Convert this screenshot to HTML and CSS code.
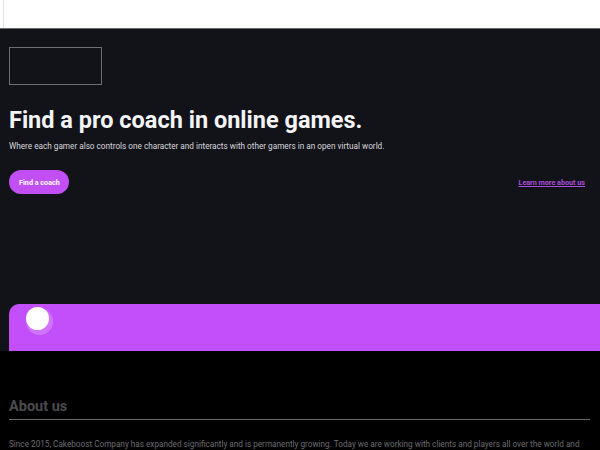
FILE: index.html
```html
<!DOCTYPE html>
<html>
<head>
<meta charset="utf-8">
<link rel="stylesheet" href="styles.css">
</head>
<body>
<div class="topbar"><div class="topbar-edge"></div></div>
<section class="hero">
  <div class="logo-box"></div>
  <h1 class="hero-title">Find a pro coach in online games.</h1>
  <p class="hero-sub">Where each gamer also controls one character and interacts with other gamers in an open virtual world.</p>
  <div class="hero-actions">
    <a class="btn-primary">Find a coach</a>
    <a class="link-more">Learn more about us</a>
  </div>
  <div class="band">
    <div class="band-dot"><span class="band-ring"></span><span class="band-ball"></span></div>
  </div>
</section>
<section class="about">
  <h2 class="about-title">About us</h2>
  <div class="about-rule"></div>
  <p class="about-text">Since 2015, Cakeboost Company has expanded significantly and is permanently growing. Today we are working with clients and players all over the world and</p>
</section>
</body>
</html>
```
FILE: styles.css
```css
* { box-sizing: border-box; }
html, body { margin: 0; padding: 0; }
body {
  width: 600px;
  height: 450px;
  overflow: hidden;
  font-family: Roboto, "Liberation Sans", sans-serif;
  background: #000;
}
.topbar {
  height: 29px;
  background: #fff;
  border-bottom: 1px solid #6b6b70;
  padding-left: 3px;
}
.topbar-edge {
  width: 1px;
  height: 100%;
  background: #e4e4e6;
}
.hero {
  background: #121319;
  padding: 18px 0 0 9px;
}
.logo-box {
  width: 93px;
  height: 38px;
  border: 1px solid #6e6e73;
}
.hero-title {
  margin: 20px 0 0;
  color: #f4f4f6;
  font-size: 23.5px;
  line-height: 30px;
  font-weight: 700;
}
.hero-sub {
  margin: 5px 0 0;
  color: #d8d8dc;
  font-size: 8.2px;
  line-height: 12px;
}
.hero-actions {
  display: flex;
  justify-content: space-between;
  align-items: center;
  margin-top: 18px;
  padding-right: 15px;
}
.btn-primary {
  display: inline-flex;
  align-items: center;
  height: 24px;
  padding: 0 9px 0 10px;
  border-radius: 12px;
  background: #c14ff4;
  color: #fff;
  font-size: 7.2px;
  font-weight: 700;
}
.link-more {
  color: #a84edc;
  font-size: 7.2px;
  font-weight: 700;
  text-decoration: underline;
}
.band {
  margin-top: 110px;
  height: 47px;
  background: #c34ffa;
  border-radius: 10px 0 0 0;
  padding: 3px 0 0 17px;
}
.band-dot {
  position: relative;
  width: 30px;
  height: 30px;
}
.band-ring {
  position: absolute;
  left: 0;
  top: 1px;
  width: 27px;
  height: 27px;
  border-radius: 50%;
  background: rgba(255, 255, 255, 0.22);
}
.band-ball {
  position: absolute;
  left: 0;
  top: 0;
  width: 23px;
  height: 23px;
  border-radius: 50%;
  background: #fff;
}
.about {
  padding: 47px 10px 0 9px;
}
.about-title {
  margin: 0;
  color: #4b4b4e;
  font-size: 14.5px;
  line-height: 18px;
  font-weight: 700;
}
.about-rule {
  margin-top: 3px;
  height: 1px;
  background: #6a6a6e;
}
.about-text {
  margin: 18px 0 0;
  color: #6c6c70;
  font-size: 8.2px;
  line-height: 12px;
  white-space: nowrap;
}
```
